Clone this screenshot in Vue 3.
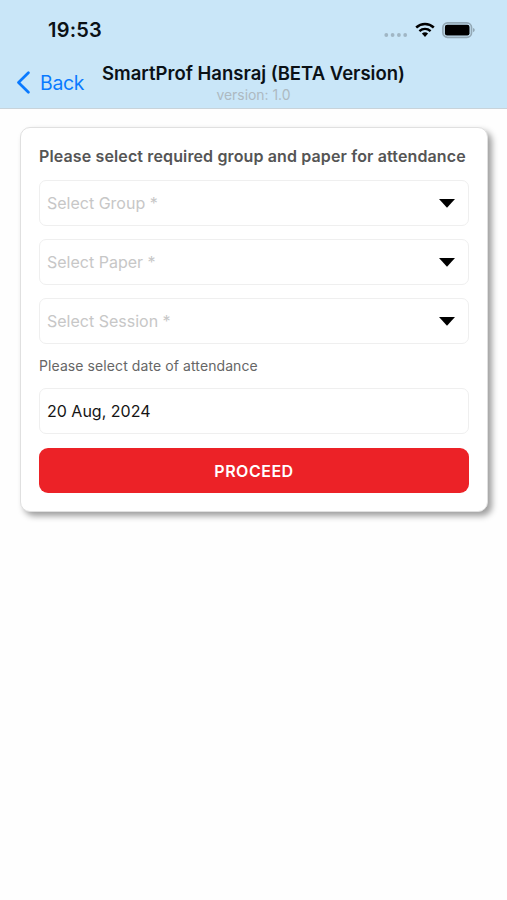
<script setup>
import {ref} from 'vue';

const date = ref('20 Aug, 2024');

const selects = ref([
  {name: 'group', label: 'Select Group *'},
  {name: 'paper', label: 'Select Paper *'},
  {name: 'session', label: 'Select Session *'},
]);
</script>

<template>
  <div class="screen">
    <header class="header">
      <div class="status-bar">
        <span class="clock">19:53</span>
        <div class="status-icons">
          <svg class="signal" width="24" height="6" viewBox="0 0 24 6">
            <circle v-for="n in 4" :key="n" :cx="n * 6.3 - 4" cy="3" r="1.9"/>
          </svg>
          <svg class="wifi" width="20" height="16" viewBox="0 0 20 16">
            <path d="M1.2 5.5C6.2.9 13.8.9 18.8 5.5" fill="none" stroke="#000" stroke-width="2.5"/>
            <path d="M4.4 9.1C7.7 6.2 12.3 6.2 15.6 9.1" fill="none" stroke="#000" stroke-width="2.4"/>
            <path d="M6.9 11.6Q10 9.1 13.1 11.6L10 14.9Z"/>
          </svg>
          <svg class="battery" width="34" height="17" viewBox="0 0 34 17">
            <rect x=".9" y=".9" width="28.6" height="14.4" rx="4.6" fill="none" stroke="#93a8b5" stroke-width="1.7"/>
            <rect x="2.9" y="2.7" width="24.6" height="10.8" rx="2.2"/>
            <path d="M31 6Q32.8 6.5 32.8 8.1T31 10.2Z" fill="#93a8b5"/>
          </svg>
        </div>
      </div>
      <div class="nav-bar">
        <button class="back">
          <svg width="14" height="23" viewBox="0 0 14 23">
            <path d="M12.4 1.7 2.5 11.5 12.4 21.3" fill="none" stroke="#0a7aff" stroke-width="2.7" stroke-linecap="round" stroke-linejoin="round"/>
          </svg>
          <span>Back</span>
        </button>
        <div class="titles">
          <h1>SmartProf Hansraj (BETA Version)</h1>
          <p>version: 1.0</p>
        </div>
      </div>
    </header>

    <main class="card">
      <h2>Please select required group and paper for attendance</h2>
      <div v-for="item in selects" :key="item.name" class="field select">
        <span>{{ item.label }}</span>
        <svg width="16" height="9" viewBox="0 0 16 9">
          <path d="M0 0H16L8 8.8Z"/>
        </svg>
      </div>
      <p class="date-label">Please select date of attendance</p>
      <div class="field date">{{ date }}</div>
      <button class="proceed">PROCEED</button>
    </main>
  </div>
</template>

<style>
body {
  background: #fff;
}
</style>

<style scoped>
.screen {
  min-height: 900px;
  background: #fefefe;
  font-family: Inter, "Liberation Sans", sans-serif;
}

.header {
  box-sizing: border-box;
  height: 109px;
  background: #c9e6f8;
  border-bottom: 1px solid #c8d3da;
}

.status-bar {
  display: flex;
  justify-content: space-between;
  align-items: center;
  height: 60px;
  padding: 0 31px 0 48px;
}

.clock {
  font-size: 20px;
  font-weight: 600;
  letter-spacing: .2px;
  color: #0b1116;
}

.status-icons {
  display: flex;
  align-items: center;
}

.signal {
  margin-top: 9px;
  fill: #a0b6c4;
}

.wifi {
  margin-left: 7px;
}

.battery {
  margin-left: 7px;
}

.nav-bar {
  display: grid;
  grid-template-columns: 86px 1fr 86px;
  height: 48px;
}

.back {
  display: flex;
  align-items: center;
  gap: 10px;
  height: 45px;
  padding: 0 0 0 16px;
  border: 0;
  background: none;
  font-family: inherit;
  font-size: 19.4px;
  letter-spacing: -.3px;
  color: #0a7aff;
}

.back svg {
  flex: none;
}

.titles {
  display: flex;
  flex-direction: column;
  align-items: center;
  white-space: nowrap;
}

h1 {
  margin: 2px 0 0;
  font-size: 18.5px;
  line-height: 22px;
  font-weight: 600;
  color: #0b1116;
}

.titles p {
  margin: 2px 0 0;
  font-size: 13.9px;
  line-height: 18px;
  color: #adb9c1;
}

.card {
  box-sizing: border-box;
  display: flex;
  flex-direction: column;
  width: 468px;
  height: 385px;
  margin: 18px 0 0 20px;
  padding: 18px 18px 0;
  border: 1px solid #e0e0e0;
  border-radius: 10px;
  background: #fff;
  box-shadow: 4px 4px 6px rgba(0, 0, 0, .38);
}

h2 {
  margin: 0 0 14px;
  font-size: 16px;
  line-height: 20px;
  font-weight: 600;
  letter-spacing: .13px;
  white-space: nowrap;
  color: #555;
}

.field {
  box-sizing: border-box;
  display: flex;
  flex: none;
  align-items: center;
  height: 46px;
  margin-bottom: 13px;
  padding: 0 13px 0 7px;
  border: 1px solid #efefef;
  border-radius: 7px;
  font-size: 16px;
}

.select {
  justify-content: space-between;
  color: #c7c7c7;
}

.date-label {
  margin: 0 0 13px;
  font-size: 14px;
  line-height: 18px;
  letter-spacing: .09px;
  color: #666;
}

.date {
  margin-bottom: 14px;
  color: #151515;
}

.proceed {
  height: 45px;
  border: 0;
  border-radius: 9px;
  background: #ec2227;
  font-family: inherit;
  font-size: 16px;
  font-weight: 600;
  letter-spacing: .5px;
  color: #fff;
}
</style>
